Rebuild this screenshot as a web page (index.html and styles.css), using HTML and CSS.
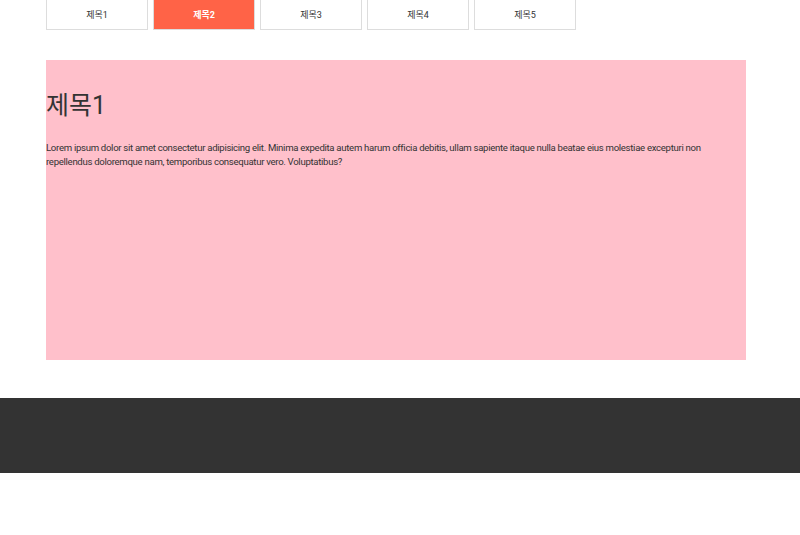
FILE: index.html
```html
<!DOCTYPE html>
<html lang="ko">
<head>
    <meta charset="utf-8" />
    <meta name="viewport" content="width=device-width, initial-scale=1.0" />
    <title>Tabs</title>
    <link rel="stylesheet" href="styles.css">
</head>
<body>
    <div class="wrap">
        <ul class="tab-list">
            <li class="tab">제목1</li>
            <li class="tab active">제목2</li>
            <li class="tab">제목3</li>
            <li class="tab">제목4</li>
            <li class="tab">제목5</li>
        </ul>

        <div class="tab-content">
            <h1 class="tab-title">제목1</h1>
            <p class="tab-text">Lorem ipsum dolor sit amet consectetur adipisicing elit. Minima expedita autem harum officia debitis, ullam sapiente itaque nulla beatae eius molestiae excepturi non repellendus doloremque nam, temporibus consequatur vero. Voluptatibus?</p>
        </div>
    </div>

    <footer class="footer"></footer>
</body>
</html>
```

FILE: styles.css
```css
body {
    margin: 0;
    padding: 0;
    font-family: Roboto, "Noto Sans CJK KR", sans-serif;
    color: #333;
    background-color: #fff;
}

.wrap {
    width: 700px;
    margin-left: 46px;
}

.tab-list {
    list-style: none;
    margin: -1px 0 0;
    padding: 0;
    display: flex;
    gap: 5px;
}

.tab {
    width: 100px;
    height: 29px;
    border: 1px solid #ddd;
    display: flex;
    align-items: center;
    justify-content: center;
    font-size: 9px;
    color: #333;
    cursor: pointer;
}

.tab.active {
    background-color: #ff6347;
    color: #fff;
    font-weight: bold;
}

.tab-content {
    margin-top: 30px;
    height: 300px;
    background-color: pink;
    overflow: hidden;
}

.tab-title {
    font-size: 25px;
    font-weight: normal;
    margin: 25px 0 20px;
}

.tab-text {
    font-size: 9.6px;
    letter-spacing: -0.3px;
    line-height: 14px;
    margin: 0;
}

.footer {
    margin-top: 38px;
    height: 75px;
    background-color: #333;
}
```
